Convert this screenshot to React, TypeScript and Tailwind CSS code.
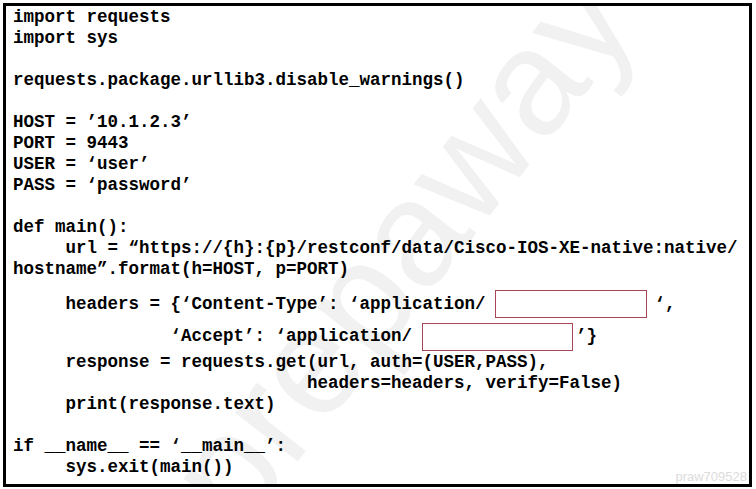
import React from 'react';

const mono = { fontFamily: '"Liberation Mono", "Courier New", monospace' };

const topLines = [
  'import requests',
  'import sys',
  '',
  'requests.package.urllib3.disable_warnings()',
  '',
  'HOST = ’10.1.2.3’',
  'PORT = 9443',
  'USER = ‘user’',
  'PASS = ‘password’',
  '',
  'def main():',
  '     url = “https://{h}:{p}/restconf/data/Cisco-IOS-XE-native:native/',
  'hostname”.format(h=HOST, p=PORT)',
];

const bottomLines = [
  '     response = requests.get(url, auth=(USER,PASS),',
  '                            headers=headers, verify=False)',
  '     print(response.text)',
  '',
  'if __name__ == ‘__main__’:',
  '     sys.exit(main())',
];

const Line = ({ text }: { text: string }) => (
  <div className="h-[21px] leading-[21px] whitespace-pre">{text || ' '}</div>
);

const Blank = ({ w }: { w: string }) => (
  <span className={`block h-[28px] border-[1.5px] border-[#a64656] bg-white ${w}`} />
);

export default function App() {
  return (
    <div className="w-[756px] h-[489px] bg-white pt-[3px] pl-[3px] overflow-hidden">
      <div className="relative w-[749px] h-[484px] border-[3px] border-black bg-white overflow-hidden">
        {/* watermark */}
        <div className="absolute left-[70px] top-[170px] w-[640px] text-center rotate-[-52deg] select-none pointer-events-none text-[150px] leading-none text-[#f1f1f1]" style={{ fontFamily: '"Liberation Sans", Arial, sans-serif' }}>
          prepaway
        </div>
        <div className="absolute right-[2px] bottom-[-2px] text-[13px] text-[#dcdcdc] pointer-events-none" style={{ fontFamily: '"Liberation Sans", Arial, sans-serif' }}>
          praw709528
        </div>

        <div className="relative pt-[1px] pl-[7px] text-[17.5px] font-bold text-black" style={mono}>
          {topLines.map((l, i) => <Line key={i} text={l} />)}

          <div className="mt-[7px] h-[34px] flex items-center whitespace-pre">
            <span>{'     headers = {‘Content-Type’: ‘application/'}</span>
            <span className="ml-[9px]"><Blank w="w-[152px]" /></span>
            <span className="ml-[8px]">{'‘,'}</span>
          </div>
          <div className="h-[31px] flex items-center whitespace-pre">
            <span>{'               ‘Accept’: ‘application/'}</span>
            <span className="ml-[10px]"><Blank w="w-[151px]" /></span>
            <span className="ml-[3px]">{'’}'}</span>
          </div>

          {bottomLines.map((l, i) => <Line key={i} text={l} />)}
        </div>
      </div>
    </div>
  );
}
